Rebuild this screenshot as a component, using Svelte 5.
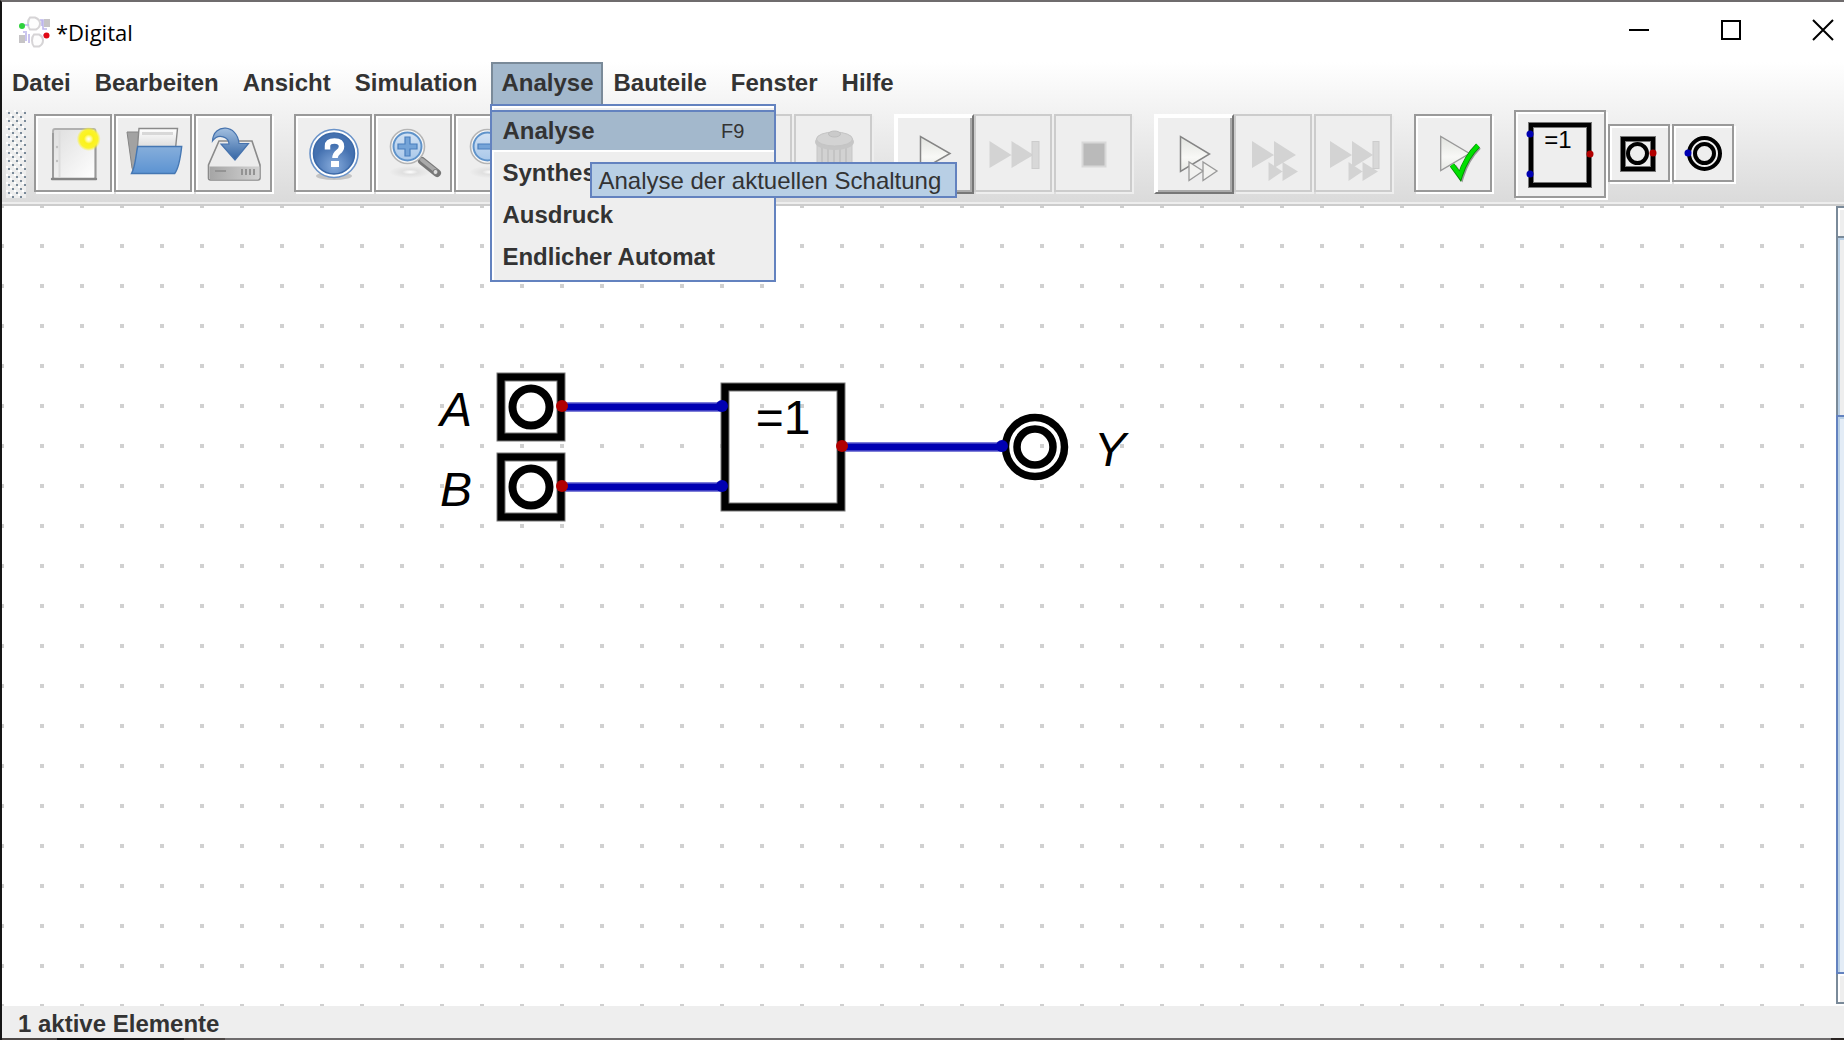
<script>
  const menus = ['Datei', 'Bearbeiten', 'Ansicht', 'Simulation', 'Analyse', 'Bauteile', 'Fenster', 'Hilfe'];
  const openMenu = 'Analyse';

  const entries = [
    { label: 'Analyse', key: 'F9', active: true },
    { label: 'Synthese' },
    { label: 'Ausdruck' },
    { label: 'Endlicher Automat' }
  ];

  const groups = [
    [
      { icon: 'new', label: 'Neu' },
      { icon: 'open', label: 'Öffnen' },
      { icon: 'save', label: 'Speichern' }
    ],
    [
      { icon: 'help', label: 'Hilfe' },
      { icon: 'zoomIn', label: 'Vergrößern' },
      { icon: 'zoomOut', label: 'Verkleinern' },
      { icon: 'fit', label: 'Einpassen' }
    ],
    [
      { icon: 'undo', label: 'Rückgängig', disabled: true },
      { icon: 'redo', label: 'Wiederherstellen', disabled: true },
      { icon: 'trash', label: 'Löschen', disabled: true }
    ],
    [
      { icon: 'play', label: 'Start', raised: true },
      { icon: 'step', label: 'Gatterschritt', disabled: true },
      { icon: 'stop', label: 'Stopp', disabled: true }
    ],
    [
      { icon: 'fastRun', label: 'Schneller Lauf', raised: true },
      { icon: 'fastForward', label: 'Lauf bis Break', disabled: true },
      { icon: 'fastStep', label: 'Lauf bis Stopp', disabled: true }
    ],
    [{ icon: 'check', label: 'Tests ausführen' }]
  ];

  const inputs = [
    { name: 'A', y: 200 },
    { name: 'B', y: 280 }
  ];

  const thumb = 76;
</script>

{#snippet lens(sign)}
  <ellipse cx="36" cy="58" rx="20" ry="6" fill="url(#floor)" />
  <path d="M48 47 L63 59" stroke="#777" stroke-width="8" stroke-linecap="round" />
  <path d="M48 46 L62 57" stroke="#aaa" stroke-width="4" stroke-linecap="round" />
  <circle cx="61.500" cy="58" r="2.500" fill="#ddd" stroke="#777" />
  <circle cx="33.500" cy="32.500" r="17" fill="#fafafa" stroke="#b5b5b5" stroke-width="1.600" />
  <circle cx="33.500" cy="32.500" r="14" fill="url(#glass)" stroke="#5f93ca" stroke-width="2" />
  {#if sign === 'plus'}
    <path d="M31 23h5v7h7v5h-7v7h-5v-7h-7v-5h7z" fill="#75a4d8" stroke="#4a7fbd" stroke-width="1.200" />
  {:else if sign === 'minus'}
    <path d="M24 30h19v5h-19z" fill="#75a4d8" stroke="#4a7fbd" stroke-width="1.200" />
  {/if}
{/snippet}

{#snippet picture(icon)}
  {#if icon === 'new'}
    <rect x="19" y="15" width="42.500" height="50" rx="2" fill="url(#paper)" stroke="#b0b0b0" stroke-width="1.800" />
    <path d="M19 19v45M61.500 30v34" stroke="#999" stroke-width="1.800" />
    <path d="M18 65h44" stroke="#858585" stroke-width="2.400" stroke-linecap="round" />
    <path d="M25.500 17v46" stroke="#dcdcdc" stroke-width="2" />
    <circle cx="23" cy="33" r="1.200" fill="#c0c0c0" /><circle cx="23" cy="47" r="1.200" fill="#c0c0c0" />
    <circle cx="54.700" cy="25" r="12" fill="url(#sun)" />
  {:else if icon === 'open'}
    <path d="M13 18h12v4h34l-2 36H20l-2-4z" fill="#a2a2a2" stroke="#858585" />
    <path d="M25 14.500h38.500l-3 30h-38z" fill="url(#sheets)" stroke="#8a8a8a" stroke-width="1.400" />
    <path d="M28 19.500h31" stroke="#d8d8d8" stroke-width="3" />
    <path d="M23.700 32.500h44c-1 9-3 22-7 27H17.500c4-7 4-17 6.200-27z" fill="url(#folder)" stroke="#4577b3" stroke-width="1.400" />
  {:else if icon === 'save'}
    <path d="M25 27h33l8 24v13q0 2-2 2H16.500q-2 0-2-2V51z" fill="#ececec" stroke="#8a8a8a" stroke-width="1.600" />
    <path d="M15.500 52.500h50v11q0 2-2 2h-46q-2 0-2-2z" fill="url(#steel)" />
    <path d="M21 57h11M48 55v6M52 55v6M56 55v6M60 55v6" stroke="#939393" stroke-width="2" />
    <path d="M18.500 27c1-18 25-17 26.500 2.500h9.500L41 46 27 30h8c0-6-10-12-16.500-3z" fill="url(#arrow)" stroke="#4673ae" stroke-width="1.200" />
  {:else if icon === 'help'}
    <ellipse cx="40" cy="62" rx="18" ry="4" fill="#c4c4c4" />
    <circle cx="40" cy="39.500" r="24" fill="#fff" stroke="#6a93c9" stroke-width="1.600" />
    <circle cx="40" cy="39.500" r="20.500" fill="url(#ball)" stroke="#3b69a8" stroke-width="1.600" />
    <path d="M33.500 35.500v-3.500q0-5 7-5t7 5.500c0 6-6.500 5-6.500 11.500" fill="none" stroke="#fff" stroke-width="5.500" />
    <rect x="37" y="47" width="8" height="6" fill="#fff" />
  {:else if icon === 'zoomIn'}
    {@render lens('plus')}
  {:else if icon === 'zoomOut'}
    {@render lens('minus')}
  {:else if icon === 'fit'}
    {@render lens('')}
  {:else if icon === 'undo'}
    <path d="M54 56V40H30V30L16 44l14 14V48" fill="#ccc" />
  {:else if icon === 'redo'}
    <path d="M24 56V40h24V30l14 14-14 14V48" fill="#ccc" />
  {:else if icon === 'trash'}
    <path d="M23 30h35v32q-17 7-35 0z" fill="#d2d2d2" stroke="#c6c6c6" />
    <path d="M28 34v30M34 35v31M40 35v31M46 35v31M52 34v30" stroke="#c4c4c4" stroke-width="2" />
    <ellipse cx="40.500" cy="28" rx="19.500" ry="8" fill="#c6c6c6" />
    <ellipse cx="40.500" cy="25" rx="18" ry="7" fill="#d3d3d3" stroke="#c4c4c4" />
    <ellipse cx="40.500" cy="20" rx="6" ry="3" fill="#cacaca" stroke="#bebebe" />
  {:else if icon === 'play'}
    <path d="M26.500 22.500v34L56 39.500z" fill="url(#tri)" stroke="#858585" stroke-width="1.500" />
  {:else if icon === 'step'}
    <path d="M15.500 27v27l22-13zM37.500 27v27l22-13z" fill="#d3d3d3" />
    <rect x="58" y="27.500" width="7" height="27" fill="#d8d8d8" stroke="#ccc" />
  {:else if icon === 'stop'}
    <rect x="28.500" y="28.500" width="23" height="24" fill="#bababa" stroke="#d8d8d8" stroke-width="2" />
  {:else if icon === 'fastRun'}
    <path d="M26.500 22.500v35L55.500 40z" fill="url(#tri)" stroke="#858585" stroke-width="1.500" />
    <path d="M35 48v18.500L49 57zM49 48v18.500L63 57z" fill="#f2f2f0" stroke="#999" stroke-width="1.300" />
  {:else if icon === 'fastForward'}
    <path d="M18 27v27l22-13zM40 27v27l22-13zM34.500 48v19l14-9.500zM48.500 48v19L64 57.500z" fill="#d3d3d3" />
  {:else if icon === 'fastStep'}
    <path d="M16 27v27l22-13zM38 27v27l21-13zM34.500 48v19l14-9.500zM48.500 48v19L64 57.500z" fill="#d3d3d3" />
    <rect x="59" y="27.500" width="6" height="27" fill="#d8d8d8" stroke="#ccc" />
  {:else if icon === 'check'}
    <path d="M26.700 22.500v34L55.500 39.500z" fill="url(#tri)" stroke="#999" stroke-width="1.300" />
    <path d="M40 52.500L47.500 63Q53 45 65 33" fill="none" stroke="#999" stroke-width="5" />
    <path d="M38 51L46 62Q52 43 64 31.500" fill="none" stroke="#008c00" stroke-width="5.500" />
    <path d="M38 51L46 61.500Q52 43 64 31.500" fill="none" stroke="#00e000" stroke-width="4" />
  {/if}
{/snippet}

<div class="window">
  <header class="title">
    <svg class="logo" width="34" height="34" viewBox="0 0 34 34" aria-hidden="true">
      <g fill="#fdfdfd" stroke="#d6d4d6" stroke-width="2">
        <path d="M13 2.500h5q5 2 5 6t-4 6h-6q-2-2-2-6t2-6zM17 19.500h5q4 2 4 6t-4 6h-5q-2-2-2-6t2-6z" />
      </g>
      <g fill="#c6c4c6">
        <path d="M27 4h6v8h-6zM2 20h6v8H2z" />
      </g>
      <path d="M7 10h5M23 5h3v9h4M25 5v6M9 18v8M12 19v9M6 17h4M26 20h3" fill="none" stroke="#bdb6ec" stroke-width="1.600" />
      <circle cx="5" cy="11" r="3" fill="#2fd23c" />
      <circle cx="29.500" cy="20.500" r="3" fill="#e00914" />
    </svg>
    <h1>*Digital</h1>
    <div class="controls">
      <button aria-label="Minimieren"><svg width="20" height="20" viewBox="0 0 20 20"><path d="M0 10h20" /></svg></button>
      <button aria-label="Maximieren"><svg width="20" height="20" viewBox="0 0 20 20"><path d="M1 1h18v18H1z" /></svg></button>
      <button class="close" aria-label="Schließen"><svg width="20" height="20" viewBox="0 0 20 20"><path d="M0 0l20 20M20 0L0 20" /></svg></button>
    </div>
  </header>

  <div class="bars">
    <nav class="menubar">
      {#each menus as menu}
        <div class="slot">
          <button class="menu" class:open={menu === openMenu}>{menu}</button>
          {#if menu === openMenu}
            <div class="popup">
              {#each entries as entry}
                <button class="entry" class:active={entry.active}>
                  <span>{entry.label}</span>
                  {#if entry.key}<kbd>{entry.key}</kbd>{/if}
                </button>
              {/each}
              <div class="tooltip" role="tooltip">Analyse der aktuellen Schaltung</div>
            </div>
          {/if}
        </div>
      {/each}
    </nav>

    <div class="toolbar" role="toolbar" aria-label="Werkzeuge">
      <div class="grip"></div>
      {#each groups as group}
        <div class="group">
          {#each group as tool}
            <button class="tool" class:raised={tool.raised} disabled={tool.disabled} aria-label={tool.label}>
              <svg width="74" height="74" viewBox="2 2 74 74" fill="none">{@render picture(tool.icon)}</svg>
            </button>
          {/each}
        </div>
      {/each}
      <div class="group">
        <button class="tool gate" aria-label="XOder">
          <svg width="88" height="84" viewBox="2 2 88 84" fill="none">
            <rect x="17" y="15" width="58" height="60" stroke="#777" stroke-width="6" />
            <rect x="17" y="15" width="58" height="60" stroke="#000" stroke-width="4" />
            <circle cx="16" cy="24" r="3.500" fill="#0000b2" /><circle cx="16" cy="64" r="3.500" fill="#0000b2" />
            <circle cx="76" cy="44" r="3.500" fill="#b20000" />
            <text x="44" y="38" font-size="24" text-anchor="middle" fill="#000">=1</text>
          </svg>
        </button>
        <button class="tool part" aria-label="Eingang">
          <svg width="58" height="54" viewBox="2 2 58 54" fill="none" stroke="#000">
            <rect x="15" y="15" width="30" height="30" stroke="#777" stroke-width="6" />
            <rect x="15" y="15" width="30" height="30" stroke-width="4" />
            <circle cx="29.500" cy="29.500" r="9.500" stroke-width="4" />
            <circle cx="45" cy="29" r="3.500" fill="#b20000" stroke="none" />
          </svg>
        </button>
        <button class="tool part" aria-label="Ausgang">
          <svg width="58" height="54" viewBox="2 2 58 54" fill="none" stroke="#000">
            <circle cx="32.500" cy="29.500" r="15.500" stroke-width="4" />
            <circle cx="32.500" cy="29.500" r="9.500" stroke-width="4" />
            <circle cx="16" cy="29" r="3.500" fill="#0000b2" stroke="none" />
          </svg>
        </button>
      </div>
    </div>
  </div>

  <main>
    <svg class="sheet" aria-label="Schaltung">
      <defs>
        <pattern id="grid" x="-2" y="-2" width="40" height="40" patternUnits="userSpaceOnUse">
          <rect width="4" height="4" fill="#d0d0d0" />
        </pattern>
        <linearGradient id="paper" x2="1" y2="1"><stop stop-color="#dedede" /><stop offset="1" stop-color="#fff" /></linearGradient>
        <linearGradient id="sheets" x2="0" y2="1"><stop stop-color="#fff" /><stop offset="1" stop-color="#c9c9c9" /></linearGradient>
        <radialGradient id="sun"><stop stop-color="#fff" /><stop offset=".2" stop-color="#fffba0" /><stop offset=".4" stop-color="#fbf21c" /><stop offset=".75" stop-color="#fbf32c" /><stop offset="1" stop-color="#fbf32c" stop-opacity="0" /></radialGradient>
        <linearGradient id="folder" x2="0" y2="1"><stop stop-color="#86aedb" /><stop offset="1" stop-color="#5c93d2" /></linearGradient>
        <linearGradient id="steel" x2="1" y2="0"><stop stop-color="#a5a5a5" /><stop offset="1" stop-color="#d2d2d2" /></linearGradient>
        <linearGradient id="arrow" x2="0" y2="1"><stop stop-color="#a2bfe0" /><stop offset="1" stop-color="#3465a4" /></linearGradient>
        <radialGradient id="ball" cy=".8"><stop stop-color="#86abdc" /><stop offset="1" stop-color="#4471b0" /></radialGradient>
        <linearGradient id="glass" x2="0" y2="1"><stop stop-color="#d3e2f3" /><stop offset="1" stop-color="#a9c8ea" /></linearGradient>
        <radialGradient id="floor"><stop stop-color="#fff" /><stop offset=".4" stop-color="#e0e0e0" /><stop offset="1" stop-color="#ededed" /></radialGradient>
        <linearGradient id="tri" x2="0" y2="1"><stop stop-color="#e2e4df" /><stop offset=".6" stop-color="#f8f8f6" /><stop offset="1" stop-color="#e6e8e4" /></linearGradient>
      </defs>
      <rect width="100%" height="100%" fill="url(#grid)" />

      <g stroke="#0000b2">
        <path d="M560 201H720M560 281H720M840 241H1000" stroke-width="10" stroke="#7f7fd8" />
        <path d="M560 201H720M560 281H720M840 241H1000" stroke-width="7" />
      </g>
      <g fill="none" stroke="#777" stroke-width="9">
        {#each inputs as input}
          <rect x="499" y={input.y - 29} width="60" height="60" />
        {/each}
        <rect x="723" y="181" width="116" height="120" />
      </g>
      <g fill="none" stroke="#000" stroke-width="7">
        {#each inputs as input}
          <rect x="499" y={input.y - 29} width="60" height="60" />
          <circle cx="529" cy={input.y + 1} r="18.500" stroke-width="8" />
        {/each}
        <rect x="723" y="181" width="116" height="120" />
        <circle cx="1033" cy="241" r="29.500" stroke-width="7.500" />
        <circle cx="1033" cy="241" r="18" stroke-width="7.500" />
      </g>
      <g fill="#b20000">
        {#each inputs as input}<circle cx="560" cy={input.y} r="6" />{/each}
        <circle cx="840" cy="240" r="6" />
      </g>
      <g fill="#0000b2">
        {#each inputs as input}<circle cx="720" cy={input.y} r="6" />{/each}
        <circle cx="1000" cy="240" r="6" />
      </g>
      <g class="names">
        {#each inputs as input}<text x="470" y={input.y + 20} text-anchor="end">{input.name}</text>{/each}
        <text x="1092" y="260">Y</text>
      </g>
      <text class="symbol" x="781" y="228" text-anchor="middle">=1</text>
    </svg>
    <div class="scroll">
      <button class="cap" aria-label="Nach oben"></button>
      <div class="track"><div class="thumb" style="height: {thumb}%"></div></div>
      <button class="cap" aria-label="Nach unten"></button>
    </div>
  </main>

  <footer>1 aktive Elemente</footer>
</div>

<style>
  :global(body) {
    margin: 0;
    background: linear-gradient(90deg, #4c4745 57px, #0c0c0c 57px, #1c1a1a 184px, #453f3c 184px, #4c4745 225px, #6e6c6d 225px, #6e6c6d calc(100% - 13px), #2a2422 calc(100% - 13px));
  }
  * { box-sizing: border-box; }
  .window {
    display: flex;
    flex-direction: column;
    height: 100vh;
    border-top: 2px solid #6f6c6d;
    border-left: 2px solid #151515;
    padding-bottom: 2px;
    overflow: hidden;
    font-family: "Liberation Sans", Arial, sans-serif;
    font-size: 24px;
    color: #333;
  }
  button {
    margin: 0;
    padding: 0;
    border: 0;
    background: none;
    font: inherit;
    color: inherit;
  }
  svg { display: block; }

  .title {
    display: flex;
    align-items: center;
    height: 60px;
    flex: none;
    padding-left: 15px;
    background: #fff;
    color: #000;
  }
  h1 {
    margin: 0 0 0 5px;
    font: 400 22px/30px "Open Sans", "Noto Sans", sans-serif;
  }
  .controls {
    display: flex;
    margin-left: auto;
    height: 56px;
    align-self: flex-start;
  }
  .controls button {
    display: flex;
    align-items: center;
    justify-content: center;
    width: 92px;
  }
  .controls .close {
    width: 67px;
    justify-content: flex-start;
    padding-left: 36px;
  }
  .controls svg {
    fill: none;
    stroke: #000;
    stroke-width: 2;
    overflow: visible;
  }

  .bars {
    flex: none;
    background: linear-gradient(#fff, #dadada);
    border-bottom: 2px solid #ccc;
    box-shadow: inset 0 -2px #eee;
  }
  .menubar {
    display: flex;
    height: 42px;
    font-weight: 700;
  }
  .slot { position: relative; display: flex; }
  .menu {
    padding: 0 14px 2px 10px;
    border-top: 2px solid transparent;
  }
  .menu.open {
    padding: 0 8px 2px;
    border: 2px solid #7a8a99;
    border-bottom: 0;
    background: #a3b8cc;
  }
  .popup {
    position: absolute;
    z-index: 2;
    top: 100%;
    left: -1px;
    display: flex;
    flex-direction: column;
    width: 286px;
    padding: 4px 0 2px;
    border: 2px solid #6382bf;
    background: #eee;
    box-shadow: inset 2px 2px #fff;
  }
  .entry {
    display: flex;
    align-items: center;
    justify-content: space-between;
    height: 42px;
    padding: 0 30px 0 10px;
    font-weight: 700;
    text-align: left;
  }
  .entry.active {
    border-top: 2px solid #6382bf;
    border-bottom: 2px solid #fff;
    background: #a3b8cc;
  }
  kbd { font: 400 20px/24px "Liberation Sans", Arial, sans-serif; }
  .tooltip {
    position: absolute;
    top: 56px;
    left: 98px;
    padding: 2px 14px 0 6px;
    border: 2px solid #6382bf;
    background: #b8cfe5;
    font-weight: 400;
    line-height: 30px;
    white-space: nowrap;
  }

  .toolbar {
    display: flex;
    align-items: center;
    gap: 20px;
    padding: 6px 0 6px 4px;
  }
  .grip {
    width: 20px;
    height: 88px;
    margin-right: -12px;
    background-color: #eee;
    background-image:
      linear-gradient(#7a8a99, #7a8a99), linear-gradient(#7a8a99, #7a8a99),
      linear-gradient(#fff, #fff), linear-gradient(#fff, #fff);
    background-repeat: space;
    background: 
      conic-gradient(from 270deg at 4px 4px, #7a8a99 0 25%, transparent 0) 2px 2px / 8px 8px,
      #eee;
    background:
      conic-gradient(from 270deg at 2px 2px, #7a8a99 0 25%, transparent 0) 2px 2px / 8px 8px,
      conic-gradient(from 270deg at 2px 2px, #7a8a99 0 25%, transparent 0) 6px 6px / 8px 8px,
      conic-gradient(from 270deg at 2px 2px, #fff 0 25%, transparent 0) 0 0 / 8px 8px,
      conic-gradient(from 270deg at 2px 2px, #fff 0 25%, transparent 0) 4px 4px / 8px 8px,
      #eee;
  }
  .group {
    display: flex;
    align-items: center;
  }
  .tool {
    display: flex;
    align-items: center;
    justify-content: center;
    flex: none;
    width: 78px;
    height: 78px;
    margin: 0 2px 2px 0;
    border: 2px solid #999;
    background: #eee;
    box-shadow: inset 2px 2px #fff, 2px 2px #fff;
  }
  .tool svg { flex: none; }
  .tool:disabled {
    border-color: #ccc;
    box-shadow: 2px 2px #eee;
  }
  .tool.raised {
    width: 80px;
    height: 80px;
    margin: 0;
    padding: 0 2px 2px 0;
    border-color: #fff #777 #777 #fff;
    box-shadow: inset 2px 2px #fff, inset -2px -2px #aaa;
  }
  .tool.gate {
    width: 92px;
    height: 88px;
    margin-bottom: 0;
  }
  .tool.part {
    width: 62px;
    height: 58px;
  }

  main {
    display: flex;
    flex: 1;
    min-height: 0;
    background: #fff;
  }
  .sheet {
    flex: 1;
    min-width: 0;
    height: 100%;
  }
  .sheet text {
    font-size: 48px;
    fill: #000;
  }
  .names { font-style: italic; }

  .scroll {
    display: flex;
    flex-direction: column;
    width: 8px;
    padding-bottom: 2px;
    overflow: hidden;
  }
  .cap {
    height: 32px;
    flex: none;
    border: solid #7a8a99;
    border-width: 2px 0 2px 2px;
    background: #eee;
    box-shadow: inset 2px 2px #fff;
  }
  .cap:last-child {
    height: 30px;
    border-top: 0;
  }
  .track {
    display: flex;
    flex: 1;
    flex-direction: column;
    justify-content: flex-end;
    border-left: 2px solid #7a8a99;
    background: #eee;
    box-shadow: inset 2px 2px #b8cfe5;
  }
  .thumb {
    margin-left: -2px;
    border: solid #6382bf;
    border-width: 2px 0 2px 2px;
    background: #e3ecf6;
    box-shadow: inset 2px 2px #b8cfe5;
  }

  footer {
    flex: none;
    height: 32px;
    padding: 2px 16px 0;
    background: #eee;
    font-weight: 700;
    line-height: 32px;
  }
</style>
